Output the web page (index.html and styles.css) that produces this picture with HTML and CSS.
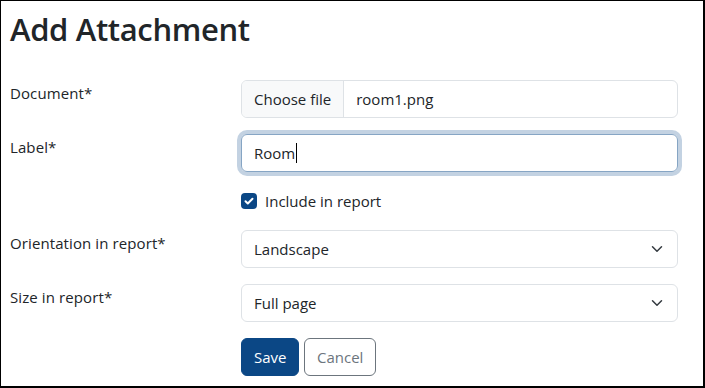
FILE: index.html
```html
<!DOCTYPE html>
<html lang="en">
<head>
<meta charset="utf-8">
<title>Add Attachment</title>
<link rel="stylesheet" href="styles.css">
</head>
<body>
<div class="page">
  <h1 class="title">Add Attachment</h1>
  <form class="form">
    <div class="row">
      <label class="label">Document*</label>
      <div class="file">
        <span class="file-btn">Choose file</span>
        <span class="file-name">room1.png</span>
      </div>
    </div>
    <div class="row">
      <label class="label">Label*</label>
      <div class="control focus"><span>Room</span><span class="caret"></span></div>
    </div>
    <div class="row">
      <span></span>
      <div class="check-row">
        <span class="check">
          <svg width="16" height="16" viewBox="0 0 16 16"><path d="M4.5 8.2l2.3 2.3 4.7-4.8" fill="none" stroke="#fff" stroke-width="2" stroke-linecap="round" stroke-linejoin="round"/></svg>
        </span>
        <span class="check-label">Include in report</span>
      </div>
    </div>
    <div class="row">
      <label class="label">Orientation in report*</label>
      <div class="control select"><span>Landscape</span>
        <svg class="chev" width="16" height="12" viewBox="0 0 16 16"><path d="M2 5l6 6 6-6" fill="none" stroke="#343a40" stroke-width="2" stroke-linecap="round" stroke-linejoin="round"/></svg>
      </div>
    </div>
    <div class="row">
      <label class="label">Size in report*</label>
      <div class="control select"><span>Full page</span>
        <svg class="chev" width="16" height="12" viewBox="0 0 16 16"><path d="M2 5l6 6 6-6" fill="none" stroke="#343a40" stroke-width="2" stroke-linecap="round" stroke-linejoin="round"/></svg>
      </div>
    </div>
    <div class="row">
      <span></span>
      <div class="actions">
        <button type="button" class="btn btn-primary">Save</button>
        <button type="button" class="btn btn-outline">Cancel</button>
      </div>
    </div>
  </form>
</div>
</body>
</html>
```

FILE: styles.css
```css
* { box-sizing: border-box; }
html, body { margin: 0; padding: 0; background: #fff; }
body {
  font-family: "Open Sans", "Noto Sans", sans-serif;
  font-size: 15px;
  color: #212529;
}
.page {
  width: 705px;
  height: 388px;
  border-style: solid;
  border-color: #000;
  border-width: 1px 2px 2px 1px;
  padding: 0 0 0 9px;
}
.title {
  margin: 9px 0 0 0;
  font-size: 31px;
  font-weight: 600;
  line-height: 39px;
  letter-spacing: -0.35px;
}
.form {
  margin-top: 31px;
  display: flex;
  flex-direction: column;
  gap: 16px;
}
.row {
  display: grid;
  grid-template-columns: 219px 437px;
  column-gap: 12px;
}
.label {
  line-height: 24px;
  padding-top: 1px;
  letter-spacing: 0.1px;
}
.file {
  display: flex;
  height: 38px;
  border: 1px solid #dee2e6;
  border-radius: 6px;
  overflow: hidden;
}
.file-btn {
  display: flex;
  align-items: center;
  padding: 0 12px;
  background: #f8f9fa;
  border-right: 1px solid #dee2e6;
}
.file-name {
  display: flex;
  align-items: center;
  padding: 0 12px;
}
.control {
  height: 38px;
  border: 1px solid #dee2e6;
  border-radius: 6px;
  display: flex;
  align-items: center;
  padding: 0 12px;
}
.control.focus {
  border-color: #86a5c4;
  box-shadow: 0 0 0 4px #c3d2e2;
}
.caret {
  display: inline-block;
  width: 1px;
  height: 20px;
  background: #000;
  margin-left: 1px;
}
.select { justify-content: space-between; padding-right: 12px; }
.chev { display: block; }
.check-row {
  display: flex;
  align-items: center;
  gap: 8px;
  height: 26px;
}
.check {
  width: 16px;
  height: 16px;
  border-radius: 4px;
  background: #0b4785;
  display: block;
}
.check svg { display: block; }
.actions {
  display: flex;
  gap: 5px;
}
.btn {
  font-family: inherit;
  font-size: 15px;
  height: 38px;
  padding: 0 12px;
  border-radius: 6px;
  border: 1px solid transparent;
  cursor: pointer;
}
.btn-primary {
  background: #0b4785;
  border-color: #0b4785;
  color: #fff;
}
.btn-outline {
  background: #fff;
  border-color: #6c757d;
  color: #6c757d;
  padding: 0 11.5px;
}
```
